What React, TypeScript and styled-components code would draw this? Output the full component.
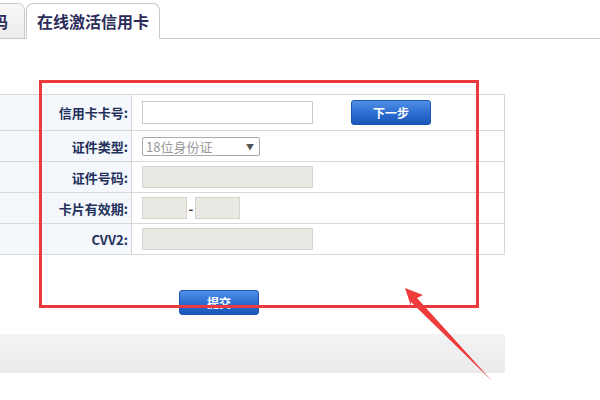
import React from "react";
import styled, { createGlobalStyle } from "styled-components";

const GlobalStyle = createGlobalStyle`
  html, body {
    margin: 0;
    padding: 0;
    background: #fff;
  }
  body {
    font-family: "Liberation Sans", "Noto Sans CJK SC", sans-serif;
  }
`;

interface Field {
  label: string;
  kind: "text" | "select" | "disabled" | "expiry";
}

const fields: Field[] = [
  { label: "信用卡卡号:", kind: "text" },
  { label: "证件类型:", kind: "select" },
  { label: "证件号码:", kind: "disabled" },
  { label: "卡片有效期:", kind: "expiry" },
  { label: "CVV2:", kind: "disabled" },
];

export default function App() {
  const renderValue = (f: Field, i: number) => {
    if (f.kind === "select") {
      return (
        <Select>
          <span>18位身份证</span>
          <Caret>▼</Caret>
        </Select>
      );
    }
    if (f.kind === "expiry") {
      return (
        <Inline>
          <Input $disabled $width={45} />
          <Dash>-</Dash>
          <Input $disabled $width={45} />
        </Inline>
      );
    }
    if (i === 0) {
      return (
        <Inline>
          <Input $width={171} $height={23} />
          <BlueButton $left={38}>下一步</BlueButton>
        </Inline>
      );
    }
    return <Input $disabled $width={171} />;
  };

  return (
    <>
      <GlobalStyle />
      <Page>
        <TabBar>
          <Tab $edge>码</Tab>
          <Tab $active>在线激活信用卡</Tab>
        </TabBar>

        <Form>
          <tbody>
            {fields.map((f, i) => (
              <Row key={f.label} $first={i === 0}>
                <Label>{f.label}</Label>
                <Value>{renderValue(f, i)}</Value>
              </Row>
            ))}
          </tbody>
        </Form>

        <SubmitRow>
          <BlueButton $left={0}>提交</BlueButton>
        </SubmitRow>

        <Footer />

        <Highlight />
        <Arrow viewBox="0 0 600 400" width={600} height={400}>
          <polygon
            points="405,288 423,295 417,298 492,381 411,302 411,306"
            fill="#ef3b3b"
          />
        </Arrow>
      </Page>
    </>
  );
}

const Page = styled.div`
  position: relative;
  width: 600px;
  height: 400px;
  overflow: hidden;
  display: flex;
  flex-direction: column;
`;

const TabBar = styled.div`
  display: flex;
  align-items: flex-end;
  height: 38px;
  border-bottom: 1px solid #c8c8c8;
`;

const Tab = styled.div<{ $active?: boolean; $edge?: boolean }>`
  box-sizing: border-box;
  height: 36px;
  display: flex;
  align-items: center;
  justify-content: ${(p) => (p.$edge ? "flex-end" : "center")};
  margin-left: ${(p) => (p.$edge ? "-12px" : "1px")};
  margin-bottom: -1px;
  width: ${(p) => (p.$edge ? "37px" : "134px")};
  padding-right: ${(p) => (p.$edge ? "16px" : "0")};
  border: 1px solid #c8c8c8;
  border-bottom: ${(p) => (p.$active ? "1px solid #fff" : "1px solid #c8c8c8")};
  border-radius: 7px 7px 0 0;
  background: ${(p) =>
    p.$active ? "#fff" : "linear-gradient(#f7f7f7, #ececec)"};
  color: #2c2c5a;
  font-family: "Noto Sans CJK SC", sans-serif;
  font-weight: bold;
  font-size: 16px;
`;

const Form = styled.table`
  margin-top: 55px;
  margin-left: -1px;
  width: 506px;
  border-collapse: collapse;
  font-family: "Noto Sans CJK SC", sans-serif;
  font-size: 13px;
`;

const Row = styled.tr<{ $first: boolean }>`
  height: ${(p) => (p.$first ? "36px" : "31px")};
  td {
    border: 1px solid #d8d8d8;
  }
`;

const Label = styled.td`
  box-sizing: border-box;
  width: 132px;
  padding: 0 3px 0 0;
  text-align: right;
  background: #f4f7fb;
  color: #22305c;
  font-weight: bold;
`;

const Value = styled.td`
  padding: 0 0 0 10px;
  background: #fff;
`;

const Inline = styled.div`
  display: flex;
  align-items: center;
`;

const Input = styled.div<{ $disabled?: boolean; $width: number; $height?: number }>`
  box-sizing: border-box;
  width: ${(p) => p.$width}px;
  height: ${(p) => p.$height ?? 22}px;
  border: 1px solid ${(p) => (p.$disabled ? "#d6d4cf" : "#c9c9c9")};
  background: ${(p) => (p.$disabled ? "#ebe9e4" : "#fff")};
`;

const Dash = styled.span`
  width: 8px;
  text-align: center;
  color: #333;
  font-weight: bold;
`;

const Select = styled.div`
  box-sizing: border-box;
  width: 118px;
  height: 19px;
  border: 1px solid #a9a9a9;
  border-radius: 2px;
  display: flex;
  align-items: center;
  justify-content: space-between;
  padding: 0 5px 0 3px;
  color: #9a9a9a;
  font-size: 13px;
`;

const Caret = styled.span`
  font-size: 8px;
  color: #555;
`;

const BlueButton = styled.button<{ $left: number }>`
  margin-left: ${(p) => p.$left}px;
  width: 80px;
  height: 25px;
  border: 1px solid #1d55b0;
  border-radius: 3px;
  background: linear-gradient(#4f8fe6, #2a6cd0 55%, #1b57b8);
  color: #fff;
  font-family: "Noto Sans CJK SC", sans-serif;
  font-weight: bold;
  font-size: 12px;
  padding: 0;
`;

const SubmitRow = styled.div`
  margin-top: 35px;
  padding-left: 179px;
  display: flex;
`;

const Footer = styled.div`
  margin-top: 19px;
  width: 505px;
  height: 39px;
  background: linear-gradient(#f3f3f3, #ebebeb);
`;

const Highlight = styled.div`
  position: absolute;
  left: 39px;
  top: 80px;
  width: 434px;
  height: 222px;
  border: 3px solid #ea3a3d;
  pointer-events: none;
`;

const Arrow = styled.svg`
  position: absolute;
  left: 0;
  top: 0;
  pointer-events: none;
`;
